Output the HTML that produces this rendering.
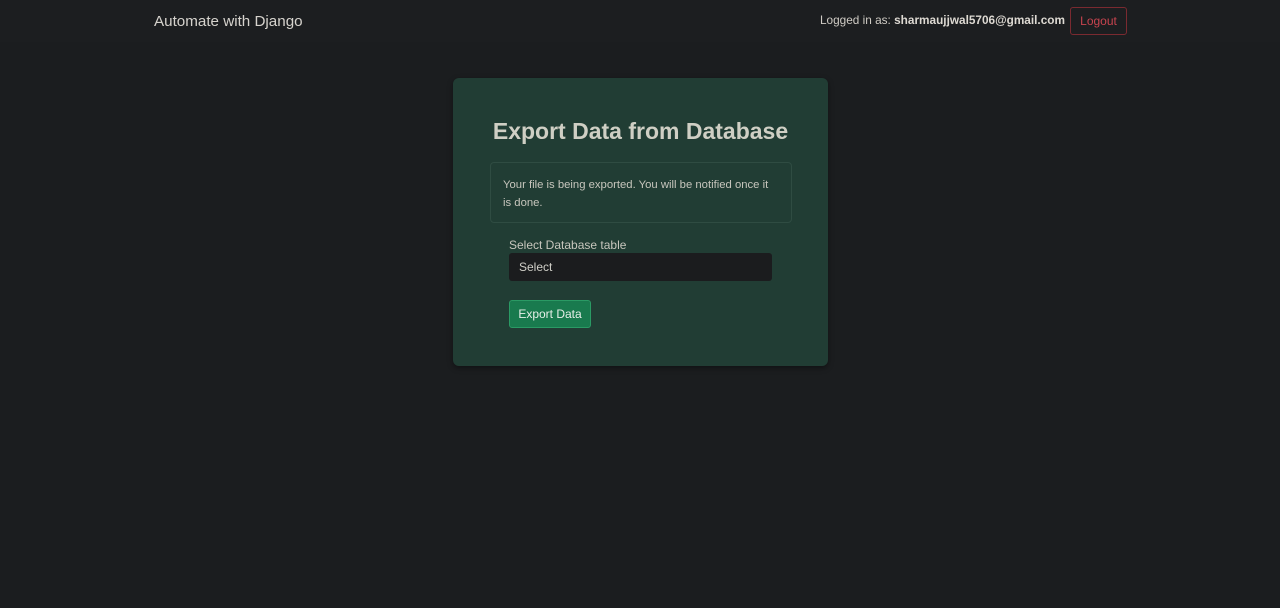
<!DOCTYPE html>
<html><head><meta charset="utf-8"><style>
html,body{margin:0;padding:0;background:#1b1d1f;width:1280px;height:608px;overflow:hidden;font-family:"Liberation Sans",sans-serif;}
.nav{position:absolute;top:0;left:0;width:1280px;height:42px;background:#1c1e20;}
.brand{position:absolute;left:154px;top:13px;font-size:15.2px;color:#d6d3cd;}
.user{position:absolute;left:820px;top:13px;font-size:11.8px;color:#cfcbc4;}
.user b{color:#ddd9d2;}
.logout{position:absolute;left:1070px;top:7px;width:55px;height:26px;border:1px solid #7a2a30;border-radius:3px;color:#c8444f;font-size:12px;line-height:27px;text-align:center;}
.card{position:absolute;left:453px;top:78px;width:375px;height:288px;background:#213d34;border-radius:6px;box-shadow:0 2px 6px rgba(0,0,0,.4);}
h1{position:absolute;left:0;width:375px;top:40px;margin:0;text-align:center;font-size:23px;color:#cfcfc4;font-weight:bold;}
.alert{position:absolute;left:37px;top:84px;width:276px;border:1px solid #2f4c42;border-radius:4px;padding:0 12px;font-size:11.3px;line-height:18px;color:#c7c6bd;padding-top:13px;height:46px;}
.lbl{position:absolute;left:56px;top:160px;font-size:12px;color:#c7c6bd;}
.sel{position:absolute;left:56px;top:175px;width:263px;height:28px;background:#1b1c1e;border-radius:3px;font-size:12px;color:#d0cfc8;line-height:29px;box-sizing:border-box;padding-left:10px;}
.btn{position:absolute;left:56px;top:222px;width:80px;height:26px;background:#197a4e;border:1px solid #2a9a64;border-radius:3px;color:#e6eee8;font-size:12px;line-height:27px;text-align:center;}
</style></head><body>
<div class="nav">
<div class="brand">Automate with Django</div>
<div class="user">Logged in as: <b>sharmaujjwal5706@gmail.com</b></div>
<div class="logout">Logout</div>
</div>
<div class="card">
<h1>Export Data from Database</h1>
<div class="alert">Your file is being exported. You will be notified once it is done.</div>
<div class="lbl">Select Database table</div>
<div class="sel">Select</div>
<div class="btn">Export Data</div>
</div>
</body></html>
